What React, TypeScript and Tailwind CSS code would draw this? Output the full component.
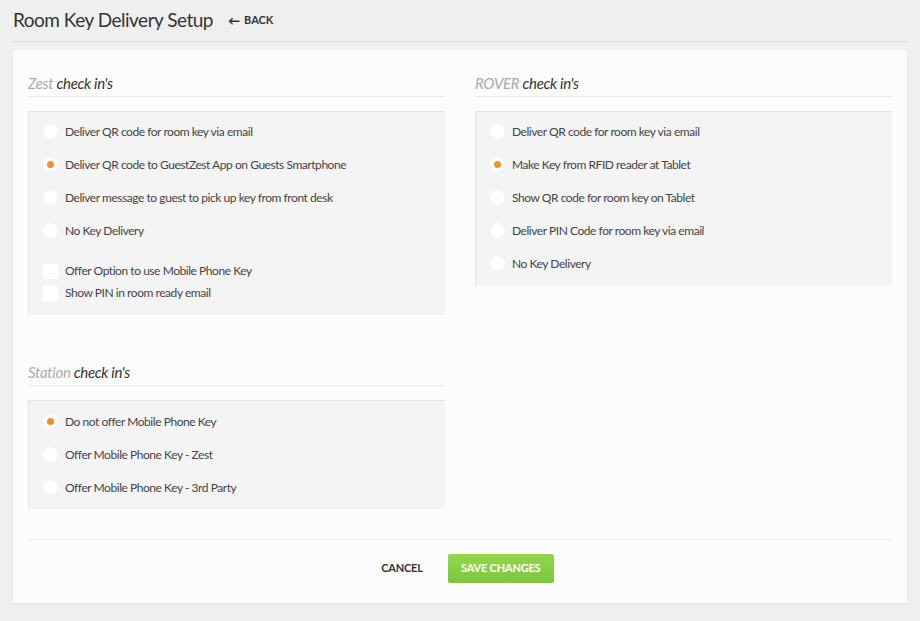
const zest = [
  { label: "Deliver QR code for room key via email", on: false },
  { label: "Deliver QR code to GuestZest App on Guests Smartphone", on: true },
  { label: "Deliver message to guest to pick up key from front desk", on: false },
  { label: "No Key Delivery", on: false },
];

const rover = [
  { label: "Deliver QR code for room key via email", on: false },
  { label: "Make Key from RFID reader at Tablet", on: true },
  { label: "Show QR code for room key on Tablet", on: false },
  { label: "Deliver PIN Code for room key via email", on: false },
  { label: "No Key Delivery", on: false },
];

const station = [
  { label: "Do not offer Mobile Phone Key", on: true },
  { label: "Offer Mobile Phone Key - Zest", on: false },
  { label: "Offer Mobile Phone Key - 3rd Party", on: false },
];

function Radio({ label, on }: { label: string; on: boolean }) {
  return (
    <div className="flex items-center h-[33px]">
      <span className="w-[15px] h-[15px] rounded-full bg-white shadow-[0_0_1px_rgba(0,0,0,0.08)] flex items-center justify-center mr-[7px]">
        {on && <span className="w-[7px] h-[7px] rounded-full bg-[#f0902a]" />}
      </span>
      <span>{label}</span>
    </div>
  );
}

function Check({ label }: { label: string }) {
  return (
    <div className="flex items-center h-[22px]">
      <span className="w-[15px] h-[15px] bg-white mr-[7px]" />
      <span>{label}</span>
    </div>
  );
}

function Heading({ brand }: { brand: string }) {
  return (
    <h2 className="text-[15px] italic border-b border-[#ebebeb] pb-[3px] mb-[14px] leading-[20px] tracking-[-0.3px]">
      <span className="text-[#a9a9a9]">{brand}</span>{" "}
      <span className="text-[#333]">check in's</span>
    </h2>
  );
}

export default function App() {
  return (
    <div
      className="w-[920px] h-[621px] bg-[#efefef] text-[#444] text-[12px] tracking-[-0.45px]"
      style={{ fontFamily: "Lato, 'Open Sans', sans-serif" }}
    >
      <header className="mx-[13px] h-[42px] border-b border-[#dcdcdc] flex items-center">
        <h1 className="text-[19px] text-[#333] mr-[15px] tracking-[-0.5px]">Room Key Delivery Setup</h1>
        <span className="text-[11px] font-bold text-[#333] flex items-center gap-[4px] tracking-normal">
          <span className="text-[12px] font-black">←</span>BACK
        </span>
      </header>

      <main className="mx-[13px] mt-[8px] h-[553px] bg-[#fcfcfc] shadow-[0_1px_2px_rgba(0,0,0,0.06)] px-[15px] pt-[23px]">
        <div className="grid grid-cols-[417px_417px] gap-x-[30px]">
          <div>
            <Heading brand="Zest" />
            <div className="bg-[#f4f4f4] border-t border-l border-[#e4e4e4] px-[14px] pt-[3px] h-[204px]">
              {zest.map((o) => (
                <Radio key={o.label} {...o} />
              ))}
              <div className="mt-[13px]">
                <Check label="Offer Option to use Mobile Phone Key" />
                <Check label="Show PIN in room ready email" />
              </div>
            </div>

            <div className="mt-[47px]">
              <Heading brand="Station" />
              <div className="bg-[#f4f4f4] border-t border-l border-[#e4e4e4] px-[14px] pt-[4px] h-[109px]">
                {station.map((o) => (
                  <Radio key={o.label} {...o} />
                ))}
              </div>
            </div>
          </div>

          <div>
            <Heading brand="ROVER" />
            <div className="bg-[#f4f4f4] border-t border-l border-[#e4e4e4] px-[14px] pt-[3px] h-[175px]">
              {rover.map((o) => (
                <Radio key={o.label} {...o} />
              ))}
            </div>
          </div>
        </div>

        <div className="mt-[30px] border-t border-[#ececec] flex justify-center items-center gap-[25px] pt-[14px] pl-[15px]">
          <button className="text-[11px] font-bold text-[#333] tracking-[-0.2px]">CANCEL</button>
          <button className="w-[106px] h-[29px] rounded-[2px] bg-gradient-to-b from-[#92d84f] to-[#7cc63c] text-white text-[11px] font-bold tracking-[-0.2px]">
            SAVE CHANGES
          </button>
        </div>
      </main>
    </div>
  );
}
